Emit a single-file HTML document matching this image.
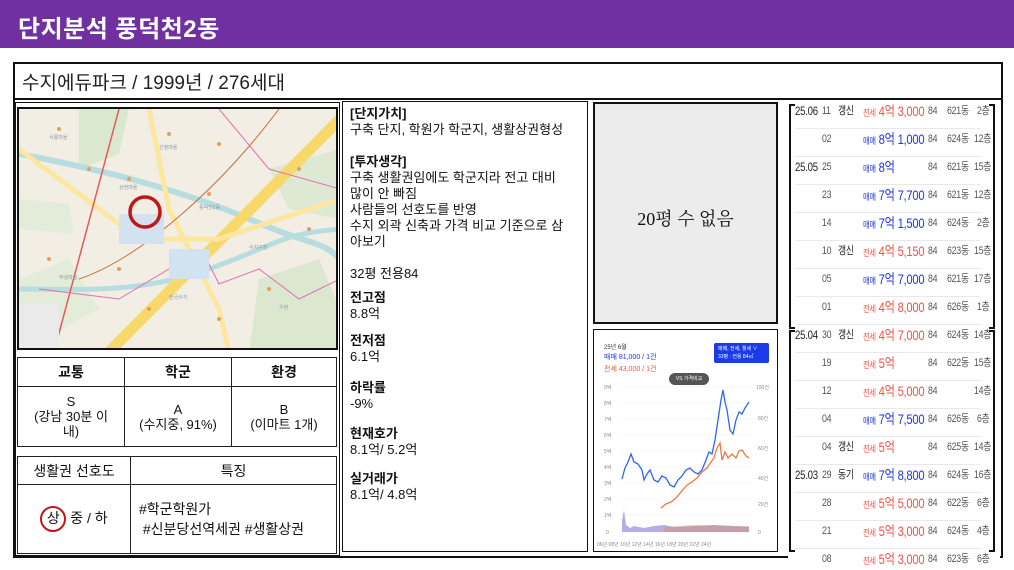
<!DOCTYPE html>
<html><head><meta charset="utf-8"><style>
*{margin:0;padding:0;box-sizing:border-box}
body{width:1014px;height:570px;background:#fff;position:relative;overflow:hidden;font-family:"Liberation Sans","Noto Sans CJK KR",sans-serif;color:#111}
.a{position:absolute}
.hdr{left:0;top:0;width:1014px;height:48px;background:#7030a0;color:#fff;font-size:24px;font-weight:bold;padding:9px 0 0 18px;letter-spacing:0.5px}
.box{border:2px solid #111}
.t{font-size:13px;line-height:16px;white-space:nowrap}
table{border-collapse:collapse;font-size:13px}
td{border:1.5px solid #222;text-align:center}
.r{position:absolute;left:0;width:212px;height:28px;font-size:11px;color:#555}
.r span{position:absolute;top:3px;line-height:14px;transform:scaleX(.8);transform-origin:left;white-space:nowrap;letter-spacing:-0.3px}
.bl{color:#2233dd}.rd{color:#ee5544}
.r .p{font-size:14px;top:1px;line-height:18px}
.r .p small{font-size:9px}
.r .d{color:#222;font-size:12px}
.ln{position:absolute;left:8px;right:20px;bottom:0;border-bottom:1px solid #e8e8e8}
</style></head><body>
<div class="a hdr">단지분석 풍덕천2동</div>
<div class="a box" style="left:13px;top:62px;width:990px;height:496px"></div>
<div class="a" style="left:14px;top:98px;width:988px;border-top:2px solid #111"></div>
<div class="a" style="left:22px;top:68px;font-size:19px;color:#222">수지에듀파크 / 1999년 / 276세대</div>

<div class="a box" style="left:15px;top:102px;width:325px;height:454px;border-width:1.5px"></div>
<div class="a" style="left:17px;top:107px;width:321px;height:243px;border:2px solid #111;overflow:hidden;background:#f4efe6">
<svg width="321" height="243">
<rect width="321" height="243" fill="#f3eee4"/>
<path d="M60 0 L110 0 L100 45 L60 60 Z" fill="#d9e8cf"/>
<path d="M250 60 L321 40 L321 110 L270 100Z" fill="#dde9d2"/>
<path d="M0 170 L50 150 L80 200 L0 243Z" fill="#e3ecd8"/>
<path d="M240 170 L300 150 L321 200 L321 243 L230 243Z" fill="#dbe8cf"/>
<path d="M0 90 L50 95 L55 125 L0 120Z" fill="#e2ecd8"/>
<path d="M0 45 C80 60 160 80 230 110 S300 130 321 150" stroke="#b8dde0" stroke-width="6" fill="none"/>
<path d="M0 180 C60 180 120 185 190 160 S260 125 321 120" stroke="#b8dde0" stroke-width="5" fill="none"/>
<path d="M90 243 L321 10" stroke="#f7d86a" stroke-width="11"/>
<path d="M0 40 L120 130 L200 130 L321 90" stroke="#fbe7a0" stroke-width="5" fill="none"/>
<path d="M130 0 L150 100 L200 200 L210 243" stroke="#fbe7a0" stroke-width="5" fill="none"/>
<path d="M100 0 L35 243" stroke="#e45b5b" stroke-width="1.5"/>
<path d="M60 170 C120 150 200 80 260 0" stroke="#c07040" stroke-width="1" fill="none"/>
<path d="M20 180 L100 190 L150 160 L190 155 L200 175 L240 160 L280 190 L321 170" stroke="#e070b0" stroke-width="1" fill="none"/>
<path d="M200 0 L250 60 L321 80" stroke="#e070b0" stroke-width="1" fill="none"/>
<rect x="100" y="105" width="45" height="30" fill="#d3e2f0"/>
<rect x="150" y="140" width="40" height="30" fill="#d3e2f0"/>
<rect x="0" y="195" width="40" height="48" fill="#eaeaea"/>
<g fill="#e0a060">
<circle cx="40" cy="20" r="2"/><circle cx="150" cy="25" r="2"/><circle cx="200" cy="35" r="2"/><circle cx="70" cy="60" r="2"/><circle cx="110" cy="70" r="2"/><circle cx="190" cy="85" r="2"/><circle cx="280" cy="60" r="2"/><circle cx="290" cy="120" r="2"/><circle cx="100" cy="160" r="2"/><circle cx="130" cy="200" r="2"/><circle cx="200" cy="210" r="2"/><circle cx="30" cy="150" r="2"/><circle cx="250" cy="180" r="2"/>
</g>
<g fill="#8899aa" font-size="5"><text x="30" y="30">서룡마을</text><text x="140" y="40">신정마을</text><text x="180" y="100">풍덕천2동</text><text x="100" y="80">상현마을</text><text x="230" y="140">수지구청</text><text x="40" y="170">부성마을</text><text x="150" y="190">한국수지</text><text x="260" y="200">우현</text></g>
<circle cx="126" cy="103" r="15" fill="none" stroke="#c01818" stroke-width="3.5"/>
</svg></div>

<table class="a" style="left:17px;top:357px;width:320px;height:90px">
<tr style="height:29px;font-weight:bold;font-size:14px"><td style="width:107px">교통</td><td style="width:107px">학군</td><td>환경</td></tr>
<tr style="line-height:15px"><td>S<br>(강남 30분 이<br>내)</td><td>A<br>(수지중, 91%)</td><td>B<br>(이마트 1개)</td></tr>
</table>
<table class="a" style="left:17px;top:456px;width:320px;height:98px">
<tr style="height:28px;font-size:14px"><td style="width:113px">생활권 선호도</td><td>특징</td></tr>
<tr><td style="font-size:14px"><span style="display:inline-block;border:2.5px solid #c01818;border-radius:50%;width:26px;height:26px;line-height:21px">상</span> 중 / 하</td><td style="text-align:left;padding-left:8px;font-size:14px;line-height:20px">#학군학원가<br>&nbsp;#신분당선역세권 #생활상권</td></tr>
</table>

<div class="a box" style="left:342px;top:101px;width:246px;height:451px;border-width:1.5px"></div>
<div class="a t" style="left:350px;top:106px"><b>[단지가치]</b><br>구축 단지, 학원가 학군지, 생활상권형성<br><br><b>[투자생각]</b><br>구축 생활권임에도 학군지라 전고 대비<br>많이 안 빠짐<br>사람들의 선호도를 반영<br>수지 외곽 신축과 가격 비교 기준으로 삼<br>아보기<br><br>32평 전용84</div>
<div class="a t" style="left:350px;top:290px"><b>전고점</b><br>8.8억</div>
<div class="a t" style="left:350px;top:333px"><b>전저점</b><br>6.1억</div>
<div class="a t" style="left:350px;top:380px"><b>하락률</b><br>-9%</div>
<div class="a t" style="left:350px;top:426px"><b>현재호가</b><br>8.1억/ 5.2억</div>
<div class="a t" style="left:350px;top:471px"><b>실거래가</b><br>8.1억/ 4.8억</div>

<div class="a" style="left:593px;top:102px;width:185px;height:222px;background:#ececec;border:2px solid #111;font-size:18px;text-align:center;padding-top:101px;font-family:'Liberation Serif','Noto Serif CJK SC',serif">20평 수 없음</div>

<div class="a" style="left:593px;top:329px;width:185px;height:223px;border:1.5px solid #111;background:#fff;overflow:hidden">
<div class="a" style="left:10px;top:12px;font-size:6px;color:#333">25년 6월</div>
<div class="a" style="left:10px;top:22px;font-size:7px;color:#2233dd">매매 81,000 / 1건</div>
<div class="a" style="left:10px;top:34px;font-size:7px;color:#ee5544">전세 43,000 / 1건</div>
<div class="a" style="left:120px;top:13px;width:55px;height:20px;background:#1a3be8;border-radius:2px;color:#fff;font-size:5px;padding:2px 4px;line-height:8px">매매, 전세, 월세 ∨<br>33평 : 전용 84㎡</div>
<div class="a" style="left:75px;top:43px;width:40px;height:12px;background:#555;border-radius:6px;color:#fff;font-size:5px;text-align:center;line-height:12px">VS 가격비교</div>
<svg class="a" style="left:0;top:0" width="185" height="223">
<g stroke="#eee" stroke-width="0.5"><line x1="25" y1="57" x2="158" y2="57"/><line x1="25" y1="73" x2="158" y2="73"/><line x1="25" y1="89" x2="158" y2="89"/><line x1="25" y1="105" x2="158" y2="105"/><line x1="25" y1="121" x2="158" y2="121"/><line x1="25" y1="137" x2="158" y2="137"/><line x1="25" y1="153" x2="158" y2="153"/><line x1="25" y1="169" x2="158" y2="169"/><line x1="25" y1="185" x2="158" y2="185"/><line x1="25" y1="202" x2="158" y2="202"/></g>
<g font-size="5" fill="#888"><text x="10" y="59">9억</text><text x="10" y="75">8억</text><text x="10" y="91">7억</text><text x="10" y="107">6억</text><text x="10" y="123">5억</text><text x="10" y="139">4억</text><text x="10" y="155">3억</text><text x="10" y="171">2억</text><text x="10" y="187">1억</text><text x="12" y="204">0</text>
<text x="162" y="59">100건</text><text x="164" y="90">80건</text><text x="164" y="120">60건</text><text x="164" y="150">40건</text><text x="164" y="176">20건</text><text x="164" y="204">0</text>
<text x="3" y="216">06년 08년 10년 12년 14년 16년 18년 20년 22년 24년</text></g>
<path d="M28 149 L31 138 L34 132 L37 124 L40 132 L44 134 L48 140 L50 150 L53 144 L56 140 L60 150 L64 152 L68 146 L72 148 L76 155 L80 157 L84 150 L88 146 L92 140 L96 138 L100 142 L104 144 L108 140 L112 130 L115 122 L118 124 L121 110 L124 90 L127 70 L129 60 L131 72 L133 80 L136 100 L139 104 L142 90 L145 82 L148 84 L151 78 L155 72" stroke="#3366ee" stroke-width="1.3" fill="none"/>
<path d="M67 178 L72 174 L77 172 L82 168 L87 162 L93 155 L98 152 L103 148 L108 142 L113 138 L117 132 L120 128 L123 118 L126 113 L128 130 L131 122 L134 128 L138 124 L142 128 L145 121 L148 120 L152 126 L155 128" stroke="#ee7744" stroke-width="1.3" fill="none"/>
<path d="M28 202 L28 190 L30 180 L32 195 L36 198 L40 196 L50 198 L60 196 L70 195 L80 197 L100 196 L120 195 L140 196 L155 197 L155 202Z" fill="#8877cc" opacity="0.6"/>
<path d="M70 202 L70 197 L100 195 L130 196 L155 196 L155 202Z" fill="#dd8855" opacity="0.4"/>
</svg></div>

<div class="a" style="left:788px;top:101px;width:214px;height:469px;overflow:hidden">
<div class="r" style="top:0"><span class="d" style="left:7px">25.06</span><span style="left:34px">11</span><span style="left:50px;color:#222">갱신</span><span class="p rd" style="left:75px"><small>전세</small> 4억 3,000</span><span style="left:140px">84</span><span style="left:159px">621동</span><span style="left:189px">2층</span><div class="ln"></div></div>
<div class="r" style="top:28px"><span style="left:34px">02</span><span class="p bl" style="left:75px"><small>매매</small> 8억 1,000</span><span style="left:140px">84</span><span style="left:159px">624동</span><span style="left:186px">12층</span><div class="ln"></div></div>
<div class="r" style="top:56px"><span class="d" style="left:7px">25.05</span><span style="left:34px">25</span><span class="p bl" style="left:75px"><small>매매</small> 8억</span><span style="left:140px">84</span><span style="left:159px">621동</span><span style="left:186px">15층</span><div class="ln"></div></div>
<div class="r" style="top:84px"><span style="left:34px">23</span><span class="p bl" style="left:75px"><small>매매</small> 7억 7,700</span><span style="left:140px">84</span><span style="left:159px">621동</span><span style="left:186px">12층</span><div class="ln"></div></div>
<div class="r" style="top:112px"><span style="left:34px">14</span><span class="p bl" style="left:75px"><small>매매</small> 7억 1,500</span><span style="left:140px">84</span><span style="left:159px">624동</span><span style="left:189px">2층</span><div class="ln"></div></div>
<div class="r" style="top:140px"><span style="left:34px">10</span><span style="left:50px;color:#222">갱신</span><span class="p rd" style="left:75px"><small>전세</small> 4억 5,150</span><span style="left:140px">84</span><span style="left:159px">623동</span><span style="left:186px">15층</span><div class="ln"></div></div>
<div class="r" style="top:168px"><span style="left:34px">05</span><span class="p bl" style="left:75px"><small>매매</small> 7억 7,000</span><span style="left:140px">84</span><span style="left:159px">621동</span><span style="left:186px">17층</span><div class="ln"></div></div>
<div class="r" style="top:196px"><span style="left:34px">01</span><span class="p rd" style="left:75px"><small>전세</small> 4억 8,000</span><span style="left:140px">84</span><span style="left:159px">626동</span><span style="left:189px">1층</span><div class="ln"></div></div>
<div class="r" style="top:224px"><span class="d" style="left:7px">25.04</span><span style="left:34px">30</span><span style="left:50px;color:#222">갱신</span><span class="p rd" style="left:75px"><small>전세</small> 4억 7,000</span><span style="left:140px">84</span><span style="left:159px">624동</span><span style="left:186px">14층</span><div class="ln"></div></div>
<div class="r" style="top:252px"><span style="left:34px">19</span><span class="p rd" style="left:75px"><small>전세</small> 5억</span><span style="left:140px">84</span><span style="left:159px">622동</span><span style="left:186px">15층</span><div class="ln"></div></div>
<div class="r" style="top:280px"><span style="left:34px">12</span><span class="p rd" style="left:75px"><small>전세</small> 4억 5,000</span><span style="left:140px">84</span><span style="left:186px">14층</span><div class="ln"></div></div>
<div class="r" style="top:308px"><span style="left:34px">04</span><span class="p bl" style="left:75px"><small>매매</small> 7억 7,500</span><span style="left:140px">84</span><span style="left:159px">626동</span><span style="left:189px">6층</span><div class="ln"></div></div>
<div class="r" style="top:336px"><span style="left:34px">04</span><span style="left:50px;color:#222">갱신</span><span class="p rd" style="left:75px"><small>전세</small> 5억</span><span style="left:140px">84</span><span style="left:159px">625동</span><span style="left:186px">14층</span><div class="ln"></div></div>
<div class="r" style="top:364px"><span class="d" style="left:7px">25.03</span><span style="left:34px">29</span><span style="left:50px;color:#222">동기</span><span class="p bl" style="left:75px"><small>매매</small> 7억 8,800</span><span style="left:140px">84</span><span style="left:159px">624동</span><span style="left:186px">16층</span><div class="ln"></div></div>
<div class="r" style="top:392px"><span style="left:34px">28</span><span class="p rd" style="left:75px"><small>전세</small> 5억 5,000</span><span style="left:140px">84</span><span style="left:159px">622동</span><span style="left:189px">6층</span><div class="ln"></div></div>
<div class="r" style="top:420px"><span style="left:34px">21</span><span class="p rd" style="left:75px"><small>전세</small> 5억 3,000</span><span style="left:140px">84</span><span style="left:159px">624동</span><span style="left:189px">4층</span><div class="ln"></div></div>
<div class="r" style="top:448px;background:#fff"><span style="left:34px">08</span><span class="p rd" style="left:75px"><small>전세</small> 5억 3,000</span><span style="left:140px">84</span><span style="left:159px">623동</span><span style="left:189px">6층</span></div>
</div>
<div class="a" style="left:789px;top:104px;width:6px;height:225px;border:2.5px solid #111;border-right:none"></div>
<div class="a" style="left:989px;top:104px;width:6px;height:225px;border:2.5px solid #111;border-left:none"></div>
<div class="a" style="left:789px;top:330px;width:6px;height:222px;border:2.5px solid #111;border-right:none"></div>
<div class="a" style="left:989px;top:330px;width:6px;height:222px;border:2.5px solid #111;border-left:none"></div>
</body></html>
